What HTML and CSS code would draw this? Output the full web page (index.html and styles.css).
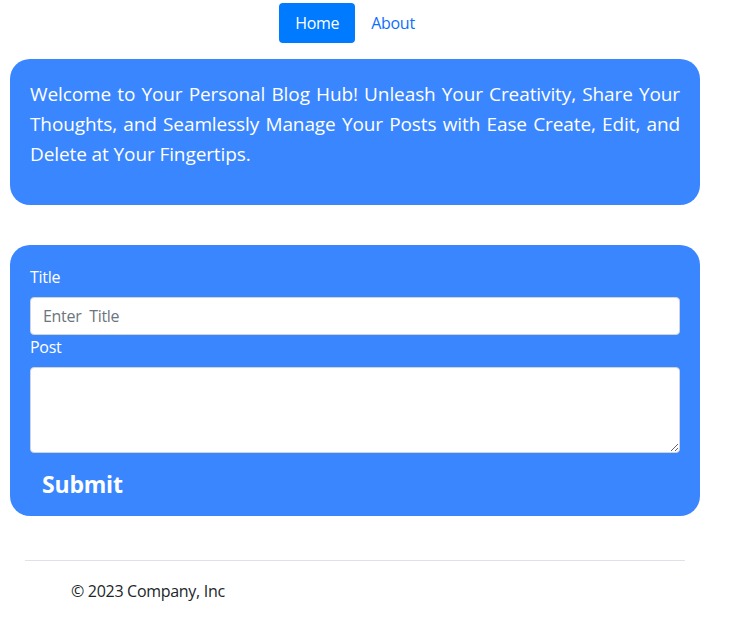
FILE: index.html
```html
<!DOCTYPE html>
<html>
<head>
<meta charset="utf-8">
<link rel="stylesheet" href="styles.css">
</head>
<body>
<div class="page">
  <nav class="nav">
    <a class="nav-link active" href="#">Home</a>
    <a class="nav-link" href="#">About</a>
  </nav>
  <section class="hero">
    <p>Welcome to Your Personal Blog Hub! Unleash Your Creativity, Share Your Thoughts, and Seamlessly Manage Your Posts with Ease Create, Edit, and Delete at Your Fingertips.</p>
  </section>
  <form class="post-form">
    <label class="label" for="title">Title</label>
    <input id="title" class="field" type="text" placeholder="Enter  Title">
    <label class="label" for="post">Post</label>
    <textarea id="post" class="field area"></textarea>
    <button type="button" class="submit">Submit</button>
  </form>
  <footer class="footer">
    <div class="rule"></div>
    <p class="copy">© 2023 Company, Inc</p>
  </footer>
</div>
</body>
</html>
```
FILE: styles.css
```css
* { box-sizing: border-box; }
html, body { margin: 0; padding: 0; background: #fff; }
body {
  font-family: "Open Sans", "Noto Sans", sans-serif;
  font-size: 16px;
  letter-spacing: -0.3px;
  line-height: 1.5;
  color: #212529;
}
.page {
  width: 710px;
  padding: 3px 10px 0 10px;
}
.nav {
  display: flex;
  justify-content: center;
  height: 40px;
}
.nav-link {
  display: block;
  padding: 8px 16px;
  text-decoration: none;
  color: #0d6efd;
  border-radius: 4px;
  line-height: 24px;
}
.nav-link.active {
  background: #007bff;
  color: #fff;
}
.hero {
  margin-top: 16px;
  background: #3a86ff;
  border-radius: 20px;
  padding: 20px 20px 20px 20px;
  color: #fff;
}
.hero p {
  margin: 0 0 16px 0;
  font-size: 19px;
  letter-spacing: -0.1px;
  line-height: 30px;
  text-align: justify;
}
.post-form {
  margin-top: 40px;
  background: #3a86ff;
  border-radius: 20px;
  padding: 20px 20px 8px 20px;
  display: flex;
  flex-direction: column;
  align-items: flex-start;
}
.label {
  color: #fff;
  line-height: 24px;
  margin-bottom: 8px;
}
.field {
  width: 100%;
  border: 1px solid #ced4da;
  border-radius: 4px;
  background: #fff;
  font-family: inherit;
  letter-spacing: inherit;
  font-size: 16px;
  color: #212529;
  padding: 6px 12px;
  line-height: 24px;
  height: 38px;
  display: block;
}
.field::placeholder { color: #6c757d; white-space: pre; }
.area {
  height: 86px;
  resize: vertical;
}
.submit {
  margin-top: 7px;
  background: transparent;
  border: 0;
  color: #fff;
  font-family: inherit;
  font-weight: 700;
  font-size: 23px;
  letter-spacing: -0.2px;
  line-height: 36px;
  padding: 6px 12px;
  cursor: pointer;
}
.footer {
  margin-top: 44px;
  padding: 0 15px;
}
.rule {
  border-top: 1px solid #dee2e6;
}
.copy {
  margin: 18px 0 0 0;
  padding-left: 46px;
  line-height: 24px;
  color: #212529;
}
```
